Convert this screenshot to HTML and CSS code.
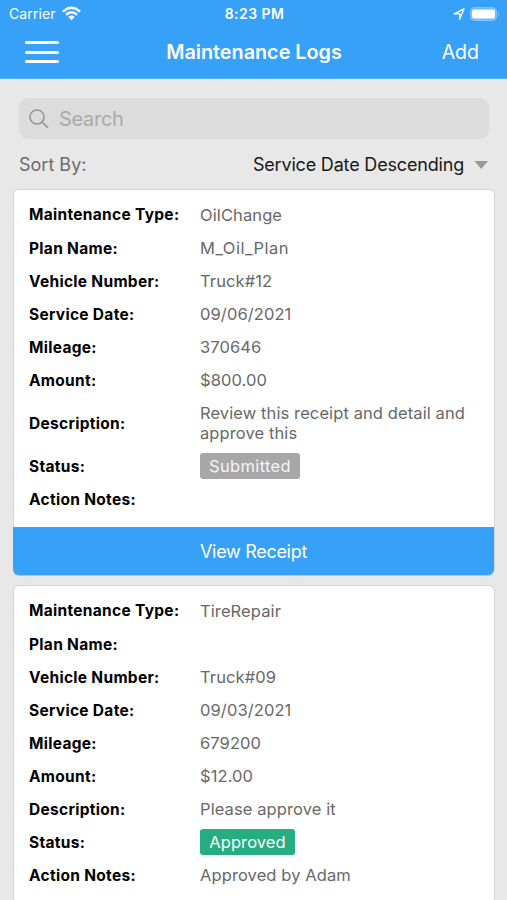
FILE: index.html
```html
<!DOCTYPE html>
<html lang="en">
<head>
<meta charset="utf-8">
<title>Maintenance Logs</title>
<link rel="stylesheet" href="styles.css">
</head>
<body>
<header class="header">
  <div class="status-bar">
    <div class="carrier"><span class="carrier-name">Carrier</span>
      <svg width="19" height="15" viewBox="0 0 19 15" fill="none" stroke="#fff" stroke-width="2.5"><path d="M1 5.600Q9.500-2.100 18 5.600M4 8.700Q9.500 3.900 15 8.700"/><path d="M6.300 10.900Q9.500 8.300 12.700 10.900L9.500 14.200Z" fill="#fff" stroke="none"/></svg>
    </div>
    <span class="clock">8:23 PM</span>
    <div class="indicators">
      <svg width="12" height="12" viewBox="0 0 12 12" fill="none" stroke="#fff" stroke-width="1.400" stroke-linejoin="round"><path d="M1 5.800 11 1 6.700 11V5.800Z"/></svg>
      <svg width="30" height="14" viewBox="0 0 30 14"><rect x="0.500" y="0.500" width="26" height="13" rx="4" fill="#6dbcfb" stroke="#80c5fc"/><rect x="2" y="2.500" width="23" height="9" rx="2" fill="#fff"/><path d="M28 5q2 2 0 4z" fill="#8accfc"/></svg>
    </div>
  </div>
  <nav class="nav">
    <div class="menu"><i></i><i></i><i></i></div>
    <h1 class="title">Maintenance Logs</h1>
    <span class="add">Add</span>
  </nav>
</header>
<main>
  <div class="search">
    <svg width="20" height="20" viewBox="0 0 20 20" fill="none" stroke="#969696" stroke-width="1.600" stroke-linecap="round"><circle cx="8" cy="8" r="7"/><path d="M13 13 18.500 18.300"/></svg>
    <span>Search</span>
  </div>
  <div class="sort">
    <span class="sort-label">Sort By:</span>
    <span class="sort-value">Service Date Descending</span>
    <svg class="caret" width="14" height="8" viewBox="0 0 14 8"><path d="M0.500 0H14L7.200 8Z" fill="#999"/></svg>
  </div>
  <section class="card">
    <dl class="rows">
      <div class="row first"><dt>Maintenance Type:</dt><dd>OilChange</dd></div>
      <div class="row"><dt>Plan Name:</dt><dd class="plan">M_Oil_Plan</dd></div>
      <div class="row"><dt>Vehicle Number:</dt><dd>Truck#12</dd></div>
      <div class="row"><dt>Service Date:</dt><dd>09/06/2021</dd></div>
      <div class="row"><dt>Mileage:</dt><dd>370646</dd></div>
      <div class="row"><dt>Amount:</dt><dd>$800.00</dd></div>
      <div class="row tall"><dt>Description:</dt><dd>Review this receipt and detail and<br>approve this</dd></div>
      <div class="row"><dt>Status:</dt><dd><span class="badge submitted">Submitted</span></dd></div>
      <div class="row"><dt>Action Notes:</dt><dd></dd></div>
    </dl>
    <div class="receipt">View Receipt</div>
  </section>
  <section class="card open">
    <dl class="rows">
      <div class="row first"><dt>Maintenance Type:</dt><dd>TireRepair</dd></div>
      <div class="row"><dt>Plan Name:</dt><dd></dd></div>
      <div class="row"><dt>Vehicle Number:</dt><dd>Truck#09</dd></div>
      <div class="row"><dt>Service Date:</dt><dd>09/03/2021</dd></div>
      <div class="row"><dt>Mileage:</dt><dd>679200</dd></div>
      <div class="row"><dt>Amount:</dt><dd>$12.00</dd></div>
      <div class="row"><dt>Description:</dt><dd>Please approve it</dd></div>
      <div class="row"><dt>Status:</dt><dd><span class="badge approved">Approved</span></dd></div>
      <div class="row"><dt>Action Notes:</dt><dd>Approved by Adam</dd></div>
    </dl>
  </section>
</main>
</body>
</html>
```

FILE: styles.css
```css
* { box-sizing: border-box; }
body {
  margin: 0;
  height: 900px;
  display: flex;
  flex-direction: column;
  background: #e8e8e8;
  font-family: Inter, "Liberation Sans", sans-serif;
  color: #000;
}
main { flex: 1; min-height: 0; display: flex; flex-direction: column; }
svg { display: block; flex: none; }
.header { flex: none; height: 79px; background: #37a1f7; border-bottom: 1px solid #52b1fb; color: #fff; }
.status-bar {
  height: 27px;
  padding: 0 7px 0 9px;
  display: grid;
  grid-template-columns: 1fr auto 1fr;
  align-items: center;
}
.carrier { display: flex; gap: 6px; align-items: center; font-size: 14px; }
.carrier-name { letter-spacing: 0.1px; }
.clock { font-size: 14px; font-weight: 600; letter-spacing: 0.45px; }
.indicators { display: flex; gap: 5px; align-items: center; justify-content: flex-end; }
.nav {
  height: 50px;
  padding: 0 28px 0 25px;
  display: grid;
  grid-template-columns: 1fr auto 1fr;
  align-items: center;
}
.menu { width: 34px; display: grid; gap: 6.5px; }
.menu i { height: 3px; border-radius: 2px; background: #fff; }
.title { margin: 0; padding-left: 4px; font-size: 19.8px; font-weight: 600; }
.add { text-align: right; font-size: 19.5px; }
.search {
  flex: none;
  height: 41px;
  margin: 19px 18px 0 19px;
  padding-left: 10px;
  display: flex;
  align-items: center;
  gap: 10px;
  border-radius: 9px;
  background: #dcdcdc;
  color: #aaa;
  font-size: 20px;
  letter-spacing: -0.3px;
}
.sort { flex: none; height: 50px; padding: 0 19px; display: flex; align-items: center; font-size: 18px; }
.sort-label { color: #6c6c6c; }
.sort-value { margin-left: auto; margin-right: 10px; color: #181818; letter-spacing: -0.18px; }
.caret { margin-top: 2px; }
.card {
  flex: none;
  margin: 0 12px 10px 13px;
  border: 1px solid #d4d4d4;
  border-radius: 6px;
  background: #fff;
}
.open { flex: 1; min-height: 0; margin-bottom: 0; border-bottom: 0; border-radius: 6px 6px 0 0; }
.rows { margin: 0; padding: 8px 15px 11px; }
.open .rows { padding-bottom: 0; }
.row { height: 33px; display: grid; grid-template-columns: 171px 1fr; align-items: center; line-height: 20px; }
.first { height: 34px; }
.tall { height: 53px; }
dt { font-size: 15.5px; font-weight: 700; letter-spacing: 0.3px; }
dd { margin: 0; padding-bottom: 2px; font-size: 16.5px; letter-spacing: 0.1px; color: #686868; white-space: nowrap; }
.first dd { padding-bottom: 0; }
.plan { letter-spacing: 0.5px; }
.badge { display: block; width: 100px; height: 26px; border-radius: 3px; text-align: center; line-height: 26px; color: #fff; }
.submitted { background: #a7a7a7; color: #f4f4f4; letter-spacing: 0.35px; }
.approved { width: 95px; background: #26ad82; }
.receipt {
  height: 48px;
  margin: 0 0 -1px -1px;
  border-radius: 0 0 6px 6px;
  background: #37a1f7;
  box-shadow: 0 1px 0 #a9c6dc;
  color: #fff;
  text-align: center;
  font-size: 18px;
  line-height: 50px;
  letter-spacing: -0.3px;
}
```
